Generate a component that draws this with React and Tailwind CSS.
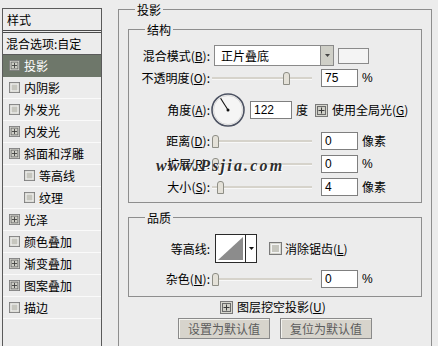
import React from 'react'

const CJK = "font-['Noto_Sans_CJK_SC','Noto_Sans_CJK_JP',sans-serif]"

function Check({ on, s = 13 }) {
  return (
    <svg width={s} height={s} viewBox="0 0 13 13" className="shrink-0">
      <rect x="0.5" y="0.5" width="12" height="12" fill="#d6d6ce" stroke="#7a7a7a" />
      <rect x="2.5" y="2.5" width="8" height="8" fill={on ? '#cfcfc7' : '#c6c6be'} stroke={on ? '#6a6a6a' : '#f4f4f4'} />
      {on && <path d="M6.5 3.5v6M3.5 6.5h6" stroke="#3a3a3a" />}
    </svg>
  )
}

const LAYERS = [
  { name: '投影', on: true, active: true },
  { name: '内阴影' },
  { name: '外发光' },
  { name: '内发光', on: true },
  { name: '斜面和浮雕', on: true },
  { name: '等高线', sub: true },
  { name: '纹理', sub: true },
  { name: '光泽', on: true },
  { name: '颜色叠加' },
  { name: '渐变叠加', on: true },
  { name: '图案叠加', on: true },
  { name: '描边' },
]

function Label({ text, k, rest = '):' }) {
  return (
    <span className="w-[81px] shrink-0 text-right whitespace-nowrap">
      {text}(<u>{k}</u>{rest}
    </span>
  )
}

function Slider({ pos }) {
  return (
    <div className="ml-[2px] w-[100px] h-[14px] flex items-center shrink-0">
      <div className="h-[3px] bg-[#d6d3cb] border-b border-[#f8f8f8]" style={{ width: pos }} />
      <div className="w-[7px] h-[13px] shrink-0 rounded-t-[3px] border border-[#8e8e86] bg-[#e4e1d8]" />
      <div className="flex-1 h-[3px] bg-[#d6d3cb] border-b border-[#f8f8f8]" />
    </div>
  )
}

function Num({ v, w = 'w-[37px]', ml = 'ml-[9px]' }) {
  return (
    <div className={`${w} ${ml} h-[18px] shrink-0 bg-white border border-[#7f7f7f] pl-[3px] flex items-center font-['Liberation_Sans',sans-serif] text-[12px]`}>
      {v}
    </div>
  )
}

function Fieldset({ title, className, children }) {
  return (
    <fieldset className={`border border-[#8e8e8e] ${className}`}>
      <legend className="ml-[16px] px-[2px] leading-[13px]">{title}</legend>
      {children}
    </fieldset>
  )
}

function Dial() {
  return (
    <svg width="34" height="34" viewBox="0 0 34 34" className="ml-[1px] shrink-0">
      <circle cx="17" cy="17" r="16" fill="#f5f5f5" stroke="#4c5262" strokeWidth="1.6" />
      <circle cx="17" cy="17" r="14.5" fill="none" stroke="#d4d4d4" strokeWidth="0.9" />
      <line x1="17" y1="17" x2="9.6" y2="5.2" stroke="#111" strokeWidth="1.1" />
      <circle cx="17" cy="17" r="1.5" fill="#111" />
    </svg>
  )
}

function Contour() {
  return (
    <div className="ml-[1px] w-[42px] h-[29px] shrink-0 flex border border-[#2a2a2a] bg-white">
      <svg width="29" height="27" viewBox="0 0 29 27">
        <polygon points="2,25 27,2 27,25" fill="#8c8c8c" />
      </svg>
      <div className="flex-1 border-l border-[#2a2a2a] flex items-center justify-center">
        <svg width="5" height="3" viewBox="0 0 5 3"><polygon points="0,0 5,0 2.5,3" fill="#111" /></svg>
      </div>
    </div>
  )
}

export default function App() {
  return (
    <div className={`relative w-[438px] h-[346px] overflow-hidden bg-[#ececec] flex items-start text-[12px] leading-[14px] text-black ${CJK}`}>
      {/* style list */}
      <div className="ml-[2px] mt-[8px] w-[100px] h-[340px] shrink-0 border border-b-0 border-[#5a5a5a] flex flex-col">
        <div className="h-[24px] pl-[4px] flex items-center border-b-[3px] border-double border-[#4a4a4a]">样式</div>
        <div className="h-[22px] pl-[3px] flex items-center border-b border-[#5a5a5a]">混合选项:自定</div>
        {LAYERS.map(l => (
          <div
            key={l.name}
            className={`h-[22px] flex items-center gap-[4px] border-b ${l.sub ? 'pl-[21px]' : 'pl-[6px]'} ${l.active ? 'bg-[#6e776a] text-white border-[#6e776a]' : 'border-[#fafafa]'}`}
          >
            <Check on={l.on} s={11} />
            <span>{l.name}</span>
          </div>
        ))}
      </div>

      {/* drop shadow settings */}
      <div className="ml-[16px] mt-[3px] w-[314px] shrink-0">
        <Fieldset title="投影" className="pb-[10px]">
          <Fieldset title="结构" className="mt-[7px] mx-[9px] pt-[9px] pb-[6px]">
            <div className="flex items-center h-[21px]">
              <Label text="混合模式" k="B" />
              <div className="ml-[4px] w-[120px] h-[21px] flex bg-white border border-[#8a8a8a]">
                <span className="flex-1 pl-[6px] flex items-center">正片叠底</span>
                <div className="w-[13px] bg-[#cfcfc7] border-l border-[#8a8a8a] flex items-center justify-center">
                  <svg width="5" height="3" viewBox="0 0 5 3"><polygon points="0,0 5,0 2.5,3" fill="#444" /></svg>
                </div>
              </div>
              <div className="ml-[4px] w-[31px] h-[16px] bg-[#f4f4f4] border border-[#8a8a8a]" />
            </div>
            <div className="mt-[3px] flex items-center h-[18px]">
              <Label text="不透明度" k="O" />
              <Slider pos={71} />
              <Num v="75" />
              <span className="ml-[4px] font-['Liberation_Sans',sans-serif]">%</span>
            </div>
            <div className="mt-[6px] flex items-center h-[34px]">
              <Label text="角度" k="A" />
              <Dial />
              <Num v="122" w="w-[42px]" ml="ml-[5px]" />
              <span className="ml-[4px]">度</span>
              <span className="ml-[7px]"><Check on /></span>
              <span className="ml-[4px]">使用全局光(<u>G</u>)</span>
            </div>
            <div className="mt-[5px] flex items-center h-[18px]">
              <Label text="距离" k="D" />
              <Slider pos={0} />
              <Num v="0" />
              <span className="ml-[4px]">像素</span>
            </div>
            <div className="mt-[5px] flex items-center h-[18px]">
              <Label text="扩展" k="R" />
              <Slider pos={0} />
              <Num v="0" />
              <span className="ml-[4px] font-['Liberation_Sans',sans-serif]">%</span>
            </div>
            <div className="mt-[5px] flex items-center h-[18px]">
              <Label text="大小" k="S" />
              <Slider pos={5} />
              <Num v="4" />
              <span className="ml-[4px]">像素</span>
            </div>
          </Fieldset>

          <Fieldset title="品质" className="mt-[8px] mx-[9px] pt-[10px] pb-[8px]">
            <div className="flex items-center h-[29px]">
              <span className="w-[81px] shrink-0 text-right">等高线:</span>
              <span className="ml-[4px]"><Contour /></span>
              <span className="ml-[12px]"><Check /></span>
              <span className="ml-[3px]">消除锯齿(<u>L</u>)</span>
            </div>
            <div className="mt-[7px] flex items-center h-[18px]">
              <Label text="杂色" k="N" />
              <Slider pos={0} />
              <Num v="0" />
              <span className="ml-[4px] font-['Liberation_Sans',sans-serif]">%</span>
            </div>
          </Fieldset>

          <div className="mt-[3px] h-[14px] pl-[101px] flex items-center gap-[4px]">
            <Check on />
            <span>图层挖空投影(<u>U</u>)</span>
          </div>
          <div className="mt-[4px] pl-[59px] flex gap-[10px]">
            <button className="w-[92px] h-[21px] bg-[#d7d4cc] border border-[#8a8a8a] text-[#5c5c5c] shadow-[inset_1px_1px_0_#f4f4f0]">设置为默认值</button>
            <button className="w-[92px] h-[21px] bg-[#d7d4cc] border border-[#8a8a8a] text-[#5c5c5c] shadow-[inset_1px_1px_0_#f4f4f0]">复位为默认值</button>
          </div>
        </Fieldset>
      </div>

      {/* watermark */}
      <div className="absolute left-[156px] top-[157px] font-['Liberation_Serif',serif] italic font-bold text-[16px] leading-[18px] tracking-[2.2px] text-[#2e2e2e] [text-shadow:1px_1px_0_#ffffff]">
        www.Psjia.com
      </div>
    </div>
  )
}
